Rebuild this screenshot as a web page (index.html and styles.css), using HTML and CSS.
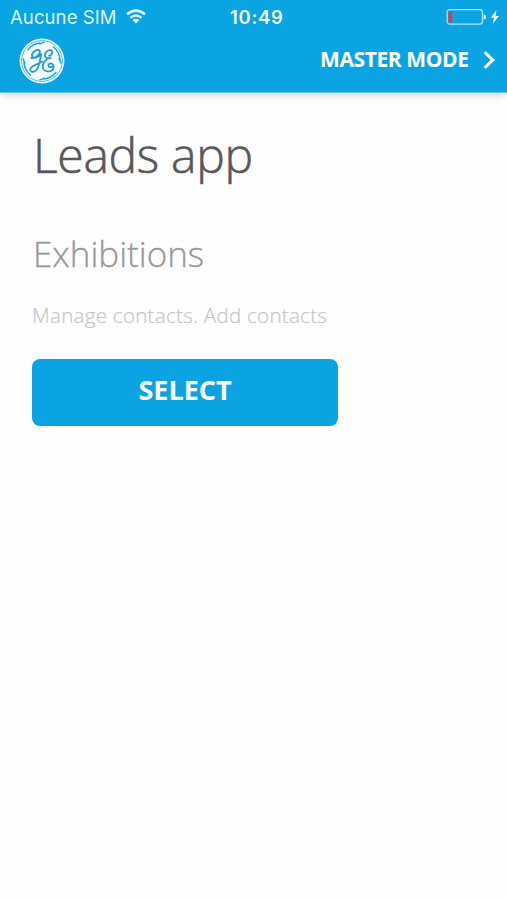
FILE: index.html
```html
<!DOCTYPE html>
<html lang="en">
<head>
<meta charset="utf-8">
<title>Leads app</title>
<link rel="stylesheet" href="styles.css">
</head>
<body>
<header class="header">
  <div class="status">
    <div class="carrier">
      <span class="carrier-name">Aucune SIM</span>
      <svg class="wifi" width="20" height="15" viewBox="0 0 20 15" fill="none" stroke="#e9fbff" stroke-width="2.5">
        <path d="M1.1 5.3Q10-2.1 18.9 5.3M4.4 8.9Q10 4.2 15.6 8.9"/>
        <path d="M6.6 11Q10 8.3 13.4 11L10 14.5Z" fill="#e9fbff" stroke="none"/>
      </svg>
    </div>
    <time class="clock">10:49</time>
    <svg class="battery" width="54" height="18" viewBox="0 0 54 18">
      <rect x="1.2" y="1.7" width="35.3" height="14.4" rx="2.6" fill="none" stroke="#a5e5fa" stroke-width="1.3"/>
      <rect x="2.5" y="3.2" width="3.8" height="11.4" rx=".6" fill="#dc3e43"/>
      <path d="M37.7 6.2Q40 6.5 40 9T37.7 11.8Z" fill="#dff8ff"/>
      <path d="M50.4 2L44.8 9.8H48L46.7 15.8L53 7.9H49.6Z" fill="#f4fdff"/>
    </svg>
  </div>
  <div class="nav">
    <svg class="logo" width="46" height="46" viewBox="0 0 46 46" fill="none" stroke-linecap="round" stroke-linejoin="round">
      <circle cx="23" cy="23" r="22.4" fill="#f7fdff"/>
      <circle cx="23" cy="23" r="20.4" stroke="#4dbbe7" stroke-width="1"/>
      <g stroke="#16a5df" stroke-width="1.5">
        <path d="M25 4.2C23.5 4.8 22.5 4.6 21 6M21 5A18.2 18.2 0 0 0 9 11.5"/>
        <path d="M41.8 25C41.2 23.5 41.4 22.5 40 21M41 21A18.2 18.2 0 0 0 34.5 9"/>
        <path d="M21 41.8C22.5 41.2 23.5 41.4 25 40M25 41A18.2 18.2 0 0 0 37 34.5"/>
        <path d="M4.2 21C4.8 22.5 4.6 23.5 6 25M5 25A18.2 18.2 0 0 0 11.5 37"/>
      </g>
      <g stroke="#219fd2" stroke-width="1.8">
        <path d="M12.3 20C16.8 20.5 22 15.5 20.7 12.8C19 10.3 12.2 14.2 13 18C13.7 21 19.3 19.8 22.4 16.2C20.6 22 20.5 27.8 18.2 31.1C16 34.8 10.7 34.5 11.2 31.2C11.7 27.8 18.5 26.5 23.5 23.5"/>
        <path d="M30.2 17.8C33.5 17.3 34.3 13 31.7 12.2C28.2 11.2 24.6 16.3 26.5 19C27.7 20.8 30.6 20 31.7 19.8C27.3 20 23.3 25.2 23.8 29C24.4 34.7 33.4 34.9 34.5 29.8C35.1 26.1 31.6 24.1 29.8 26.4C28.4 28.5 31 30.4 34.6 28"/>
      </g>
    </svg>
    <a class="mode"><span class="mode-name">MASTER MODE</span>
      <svg width="13" height="20" viewBox="0 0 13 20" fill="none" stroke="#fff" stroke-width="3.1"><path d="M1.6 2.2L9.8 10L1.6 17.8"/></svg>
    </a>
  </div>
</header>
<main class="content">
  <h1 class="title">Leads app</h1>
  <h2 class="subtitle">Exhibitions</h2>
  <p class="description">Manage contacts. Add contacts</p>
  <button class="select" type="button"><span>SELECT</span></button>
</main>
</body>
</html>
```
FILE: styles.css
```css
* { box-sizing: border-box; }
body {
  margin: 0;
  min-height: 900px;
  background: #fefefe;
  font-family: "Open Sans", sans-serif;
}
.header {
  height: 93px;
  background: #0aa4e2;
  border-bottom: 1px solid #64c5ec;
  box-shadow: 0 4px 8px -2px rgba(0, 0, 0, .18);
  color: #fff;
}
.status {
  height: 35px;
  padding: 0 7px 0 10px;
  display: grid;
  grid-template-columns: 220px 1fr 54px;
  align-items: center;
  font-family: Inter, sans-serif;
}
.carrier { display: flex; align-items: center; gap: 10px; margin-top: -2px; }
.carrier-name { width: 106px; font-size: 18.5px; color: #ddf7ff; white-space: nowrap; letter-spacing: .1px; }
.clock { margin-top: -2px; font-size: 18.5px; font-weight: 600; letter-spacing: .7px; color: #effcff; }
.battery { margin-top: -1px; }
.nav {
  height: 52px;
  padding: 0 11px 0 19px;
  display: flex;
  align-items: center;
  justify-content: space-between;
}
.mode { display: flex; align-items: center; gap: 13px; }
.mode-name { width: 150px; padding-bottom: 4px; font-size: 21px; line-height: 30px; font-weight: 700; letter-spacing: -.4px; white-space: nowrap; }
.mode svg { margin-top: -2px; }
.content { padding: 29px 32px; display: flex; flex-direction: column; align-items: flex-start; }
.title, .subtitle, .description { margin: 0; font-weight: 300; white-space: nowrap; }
.title { padding-left: 1px; font-size: 48px; line-height: 66px; letter-spacing: -.3px; color: #58585a; -webkit-text-stroke: .6px #58585a; }
.subtitle { padding-left: 1px; margin-top: 42px; font-size: 35px; line-height: 48px; color: #98989a; -webkit-text-stroke: .3px #98989a; }
.description { margin-top: 22px; font-size: 20.5px; line-height: 30px; letter-spacing: .3px; color: #c6c6c6; -webkit-text-stroke: .2px #c6c6c6; }
.select {
  width: 306px;
  height: 67px;
  margin-top: 29px;
  padding: 0 0 5px;
  border: 0;
  border-radius: 8px;
  background: #0aa4e2;
  color: #fff;
  font: 700 27px/36px "Open Sans", sans-serif;
}
```
